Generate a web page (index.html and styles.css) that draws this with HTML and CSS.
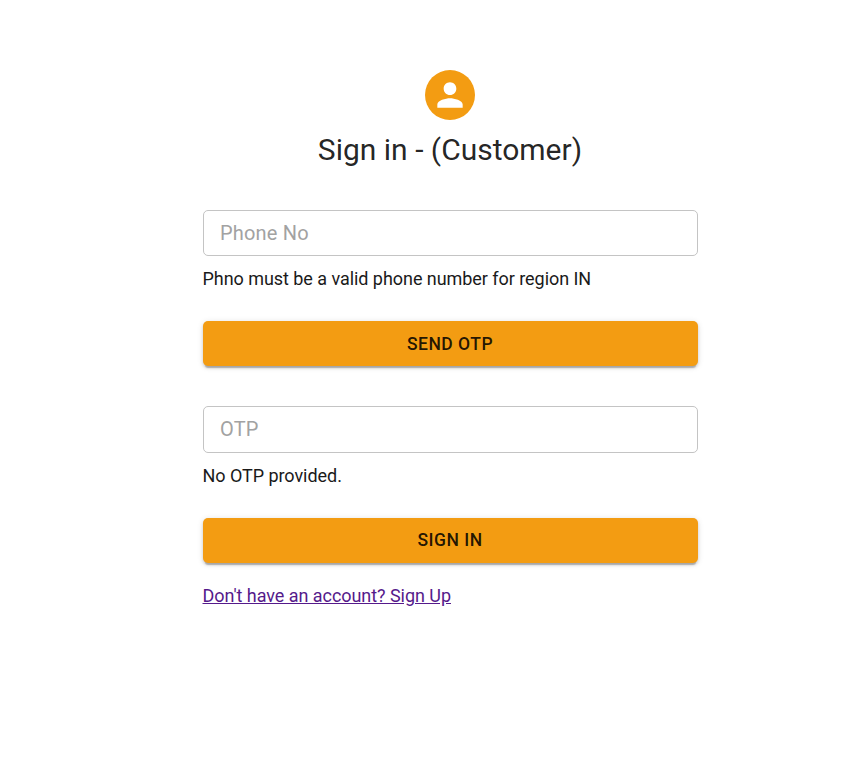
FILE: index.html
```html
<!DOCTYPE html>
<html lang="en">
<head>
<meta charset="utf-8">
<title>Sign in</title>
<link rel="stylesheet" href="styles.css">
</head>
<body>
<main class="container">
  <div class="avatar"><svg viewBox="0 0 24 24" aria-hidden="true"><path d="M12 12c2.21 0 4-1.79 4-4s-1.79-4-4-4-4 1.79-4 4 1.79 4 4 4zm0 2c-2.67 0-8 1.34-8 4v2h16v-2c0-2.66-5.33-4-8-4z"/></svg></div>
  <h1 class="title">Sign in - (Customer)</h1>
  <form class="form">
    <input class="field" type="text" placeholder="Phone No" aria-label="Phone No">
    <p class="message">Phno must be a valid phone number for region IN</p>
    <button class="button" type="button">Send OTP</button>
    <input class="field field-otp" type="text" placeholder="OTP" aria-label="OTP">
    <p class="message">No OTP provided.</p>
    <button class="button button-submit" type="button">Sign In</button>
    <a class="signup" href="#">Don't have an account? Sign Up</a>
  </form>
</main>
</body>
</html>
```
FILE: styles.css
```css
* {
  box-sizing: border-box;
}

body {
  margin: 0;
  background: #fff;
  color: rgba(0, 0, 0, 0.87);
  font-family: Roboto, "Liberation Sans", sans-serif;
}

.container {
  display: flex;
  flex-direction: column;
  align-items: center;
  width: 495px;
  margin-left: 202.5px;
  padding-top: 70px;
}

.avatar {
  display: flex;
  align-items: center;
  justify-content: center;
  width: 50px;
  height: 50px;
  border-radius: 50%;
  background: #f39c12;
}

.avatar svg {
  width: 38px;
  height: 38px;
  fill: #fff;
}

.title {
  margin: 10px 0 0;
  font-size: 30px;
  font-weight: 400;
  line-height: 40px;
}

.form {
  display: flex;
  flex-direction: column;
  width: 100%;
  margin-top: 40px;
}

.field {
  width: 100%;
  height: 46px;
  padding: 0 16.5px;
  border: 1px solid #c4c4c4;
  border-radius: 5px;
  background: transparent;
  color: inherit;
  font: 400 20px Roboto, sans-serif;
  letter-spacing: 0.19px;
}

.field::placeholder {
  color: #a2a2a2;
  opacity: 1;
}

.field-otp {
  height: 47px;
  margin-top: 40px;
  padding-bottom: 1px;
}

.message {
  margin: 10px 0 29px;
  color: #1a1a1a;
  font-size: 18px;
  letter-spacing: -0.05px;
  line-height: 26px;
}

.button {
  height: 45px;
  padding: 0;
  border: 0;
  border-radius: 5px;
  background: #f39c12;
  box-shadow: 0 4px 1px -2px rgba(0, 0, 0, 0.2), 0 2px 3px rgba(0, 0, 0, 0.14), 0 1px 6px rgba(0, 0, 0, 0.12);
  color: rgba(0, 0, 0, 0.87);
  font: 500 17.5px Roboto, sans-serif;
  letter-spacing: 0.5px;
  text-transform: uppercase;
}

.button-submit {
  padding-bottom: 2px;
}

.signup {
  align-self: flex-start;
  margin-top: 20px;
  color: #551a8b;
  font-size: 18px;
  letter-spacing: -0.05px;
  line-height: 26px;
}
```
